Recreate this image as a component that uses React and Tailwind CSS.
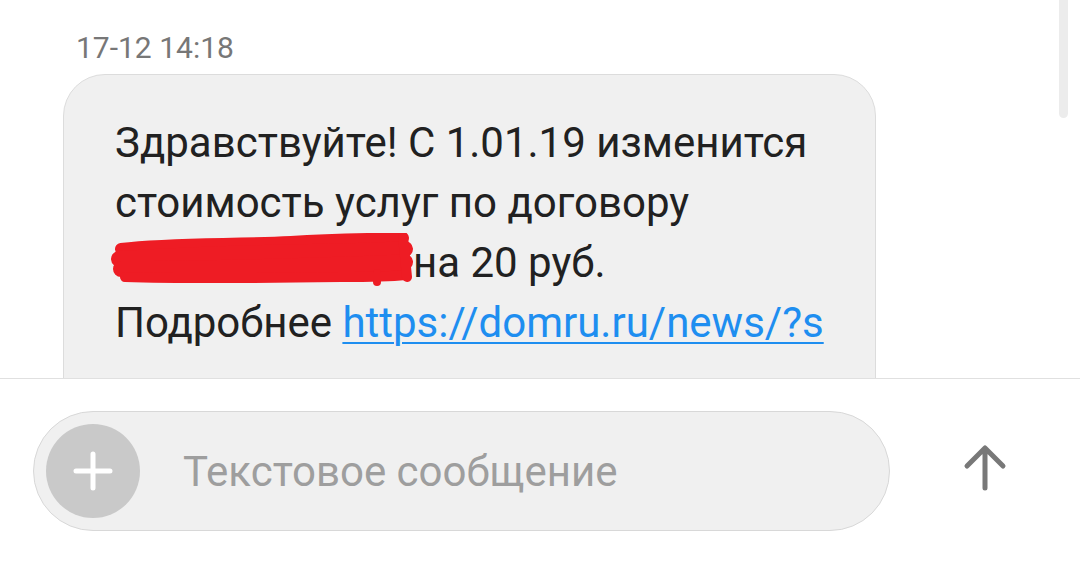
export default function App() {
  const font = { fontFamily: "Roboto, 'Noto Sans', sans-serif" };
  return (
    <div className="relative w-[1080px] h-[564px] bg-white overflow-hidden" style={font}>
      {/* scrollbar */}
      <div className="absolute left-[1059px] top-0 w-[9px] h-[118px] bg-[#ececec] rounded-b-full" />
      <div className="h-[378px] overflow-hidden pl-[63px] pt-[33px]">
        <div className="pl-[13px] text-[30px] leading-[30px] text-[#777777]">17-12 14:18</div>
        <div className="mt-[11px] w-[813px] h-[400px] rounded-[42px] border border-[#dcdcdc] bg-[#f0f0f0] pl-[51px] pt-[38px] text-[42px] leading-[60px] text-[#212121]">
          <div>Здравствуйте! С 1.01.19 изменится</div>
          <div>стоимость услуг по договору</div>
          <div className="flex">
            <span className="relative inline-block w-[298px] h-[60px] shrink-0">
              <svg className="absolute left-[-4px] top-0" width="304" height="56" viewBox="0 0 304 56">
                <path d="M10 12 C80 8 180 6 292 4 L298 20 L296 44 C220 46 120 48 14 46 C6 40 4 20 10 12 Z" fill="#ee1c24" />
                <g stroke="#ee1c24" strokeLinecap="round" strokeLinejoin="round" fill="none">
                  <path d="M10 16 C60 10 120 12 180 9 C230 6 270 6 292 5" strokeWidth="12" />
                  <path d="M8 26 C70 22 140 20 200 19 C250 18 280 17 294 16" strokeWidth="16" />
                  <path d="M10 36 C80 36 160 34 220 32 C260 31 285 30 294 29" strokeWidth="16" />
                  <path d="M14 44 C80 46 160 45 230 44 C260 44 285 43 294 42" strokeWidth="10" />
                  <path d="M292 4 L296 44" strokeWidth="10" />
                  <path d="M266 40 L266 49" strokeWidth="8" />
                </g>
              </svg>
            </span>
            <span className="whitespace-nowrap">на 20 руб.</span>
          </div>
          <div className="whitespace-nowrap">
            Подробнее <span className="text-[#1e8ef0] underline decoration-[2px] underline-offset-[5px]">https://domru.ru/news/?s</span>
          </div>
        </div>
      </div>
      <div className="h-px bg-[#e0e0e0]" />
      <div className="flex items-center pt-[32px] pl-[33px]">
        <div className="flex items-center w-[857px] h-[120px] rounded-full border border-[#d8d8d8] bg-[#f0f0f0] pl-[12px]">
          <div className="w-[94px] h-[94px] rounded-full bg-[#c9c9c9] flex items-center justify-center shrink-0">
            <svg width="42" height="42" viewBox="0 0 42 42">
              <path d="M21 4 V38 M4 21 H38" stroke="#ffffff" strokeWidth="5" strokeLinecap="round" />
            </svg>
          </div>
          <span className="ml-[43px] text-[42px] text-[#9e9e9e]">Текстовое сообщение</span>
        </div>
        <div className="ml-[73px] mb-[6px] w-[44px] h-[50px] flex items-center justify-center">
          <svg width="44" height="50" viewBox="0 0 44 50">
            <path d="M22 45 V6 M4 23 L22 5 L40 23" stroke="#787878" strokeWidth="5" strokeLinecap="round" strokeLinejoin="round" fill="none" />
          </svg>
        </div>
      </div>
    </div>
  );
}
